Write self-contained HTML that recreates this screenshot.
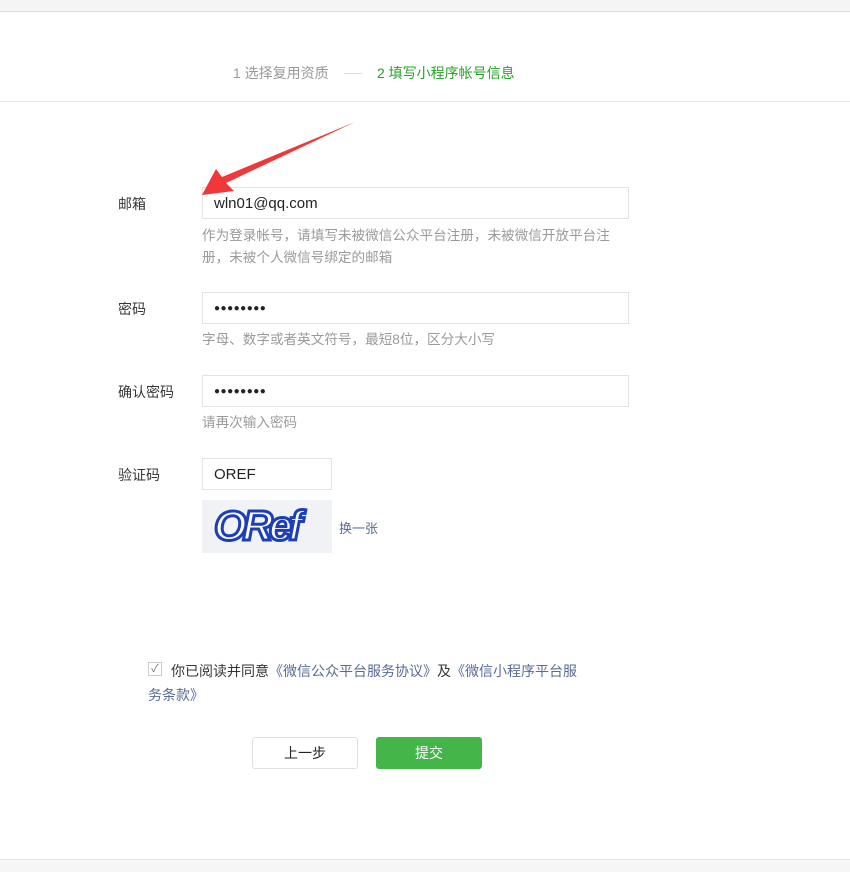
<!DOCTYPE html><html><head><meta charset="utf-8"><style>
body{margin:0;width:850px;height:871px;background:#fff;font-family:"Liberation Sans","Noto Sans CJK SC",sans-serif;position:relative;overflow:hidden;color:#353535}
.a{position:absolute;white-space:nowrap}
.lbl{font-size:14px;color:#353535}
.inp{position:absolute;border:1px solid #e3e3e3;box-sizing:border-box;background:#fff;font-size:15px;color:#222;padding-left:11px;line-height:32px}
.tip{font-size:13.6px;color:#9a9a9a;line-height:22px}
</style></head><body>
<div class="a" style="left:0;top:0;width:850px;height:11px;background:#f5f5f5;border-bottom:1px solid #dcdcdc"></div>
<div class="a" style="left:0;top:101px;width:850px;height:1px;background:#e6e6e6"></div>
<div class="a" style="left:233px;top:63px;font-size:14px;color:#9a9a9a">1 选择复用资质</div>
<div class="a" style="left:344px;top:73px;width:18px;height:1px;background:#ddd"></div>
<div class="a" style="left:377px;top:63px;font-size:14px;color:#27a227">2 填写小程序帐号信息</div>
<div class="a lbl" style="left:118px;top:194px">邮箱</div>
<div class="inp" style="left:202px;top:187px;width:427px;height:32px">wln01@qq.com</div>
<div class="a tip" style="left:202px;top:225px">作为登录帐号，请填写未被微信公众平台注册，未被微信开放平台注<br>册，未被个人微信号绑定的邮箱</div>
<div class="a lbl" style="left:118px;top:299px">密码</div>
<div class="inp" style="left:202px;top:292px;width:427px;height:32px;font-size:10px;letter-spacing:0.5px">●●●●●●●●</div>
<div class="a tip" style="left:202px;top:329px">字母、数字或者英文符号，最短8位，区分大小写</div>
<div class="a lbl" style="left:118px;top:382px">确认密码</div>
<div class="inp" style="left:202px;top:375px;width:427px;height:32px;font-size:10px;letter-spacing:0.5px">●●●●●●●●</div>
<div class="a tip" style="left:202px;top:412px">请再次输入密码</div>
<div class="a lbl" style="left:118px;top:465px">验证码</div>
<div class="inp" style="left:202px;top:458px;width:130px;height:32px">OREF</div>
<div class="a" style="left:202px;top:500px;width:130px;height:53px;background:#f1f2f6;overflow:hidden">
<span style="position:absolute;left:12px;top:2px;font:bold italic 42px 'Liberation Sans',sans-serif;color:#fff;-webkit-text-stroke:3px #1d3fb5;letter-spacing:-4px">ORef</span></div>
<div class="a" style="left:339px;top:518px;font-size:13px;color:#576b95">换一张</div>
<div class="a" style="left:148px;top:662px;width:14px;height:14px;border:1px solid #ccc;box-sizing:border-box;font-size:11px;color:#777;text-align:center;line-height:13px">✓</div>
<div class="a" style="left:148px;top:659px;font-size:14px;line-height:24px;width:440px;white-space:normal;text-indent:23px;color:#353535">你已阅读并同意<span style="color:#576b95">《微信公众平台服务协议》</span>及<span style="color:#576b95">《微信小程序平台服务条款》</span></div>
<div class="a" style="left:252px;top:737px;width:106px;height:32px;border:1px solid #e0e0e0;box-sizing:border-box;border-radius:3px;text-align:center;line-height:30px;font-size:14px;color:#222">上一步</div>
<div class="a" style="left:376px;top:737px;width:106px;height:32px;background:#44b549;border-radius:3px;text-align:center;line-height:32px;font-size:14px;color:#fff">提交</div>
<div class="a" style="left:0;top:859px;width:850px;height:12px;background:#f6f6f6;border-top:1px solid #e8e8e8"></div>
<svg class="a" style="left:0;top:0" width="850" height="871"><polygon points="355,122 226,183 234,191 202,195 216,169 222,177" fill="#f0373a"/></svg>
</body></html>
